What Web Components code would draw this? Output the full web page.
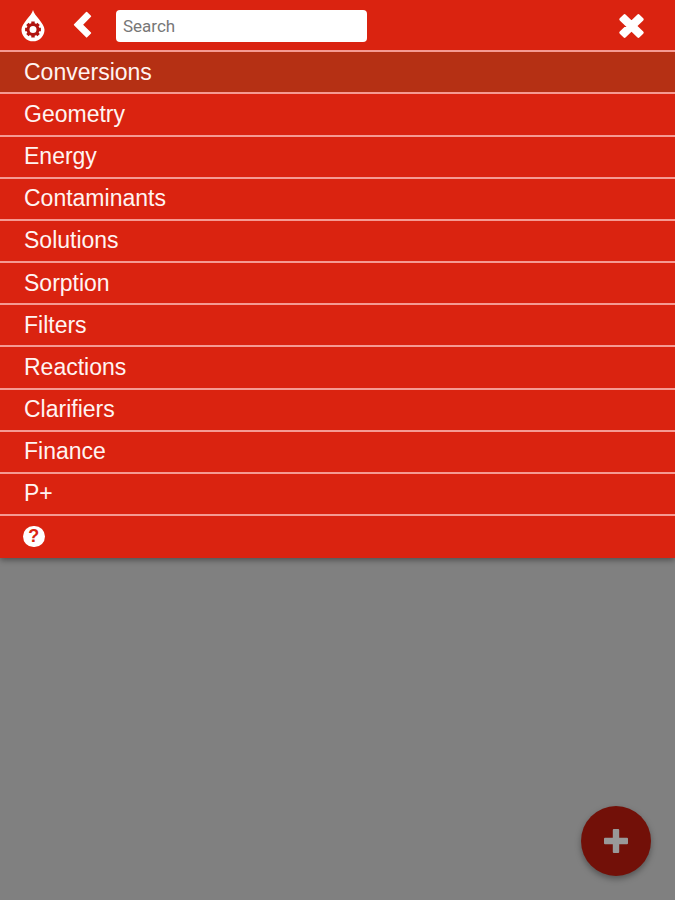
<!DOCTYPE html>
<html lang="en">
<head>
  <meta charset="UTF-8">
  <meta name="viewport" content="width=device-width, initial-scale=1">
  <title>Menu</title>
  <style>
    html,
    body {
      height: 100%;
      margin: 0;
      background: #808080;
      font-family: "Liberation Sans", Arial, sans-serif;
      overflow: hidden;
    }
  </style>
</head>
<body>
  <nav-menu>
    <menu-bar slot="bar"></menu-bar>
    <menu-item active>Conversions</menu-item>
    <menu-item>Geometry</menu-item>
    <menu-item>Energy</menu-item>
    <menu-item>Contaminants</menu-item>
    <menu-item>Solutions</menu-item>
    <menu-item>Sorption</menu-item>
    <menu-item>Filters</menu-item>
    <menu-item>Reactions</menu-item>
    <menu-item>Clarifiers</menu-item>
    <menu-item>Finance</menu-item>
    <menu-item>P+</menu-item>
    <menu-item><help-icon></help-icon></menu-item>
  </nav-menu>
  <add-button></add-button>

  <script>
    class NavMenu extends HTMLElement {
      constructor() {
        super();
        this.attachShadow({ mode: "open" });
      }

      connectedCallback() {
        this.shadowRoot.innerHTML = `
          <style>
            :host {
              display: block;
              height: 558px;
              background: #da2310;
              color: #fff4f2;
              box-shadow: 0 2px 6px rgba(0, 0, 0, 0.4);
            }
            nav {
              display: flex;
              flex-direction: column;
            }
          </style>
          <slot name="bar"></slot>
          <nav><slot></slot></nav>
        `;
      }
    }

    class MenuBar extends HTMLElement {
      constructor() {
        super();
        this.attachShadow({ mode: "open" });
      }

      connectedCallback() {
        this.shadowRoot.innerHTML = `
          <style>
            :host {
              display: flex;
              align-items: center;
              box-sizing: border-box;
              height: 50.2px;
              padding: 2px 30px 0 21px;
            }
            svg {
              display: block;
              flex: none;
            }
            .back {
              margin: 0 24px 3px 28px;
            }
            .close {
              margin-left: auto;
            }
            input {
              box-sizing: border-box;
              width: 251px;
              height: 32px;
              padding: 0 7px;
              border: 0;
              border-radius: 4px;
              background: #fff;
              font: 17px Roboto, sans-serif;
            }
            input::placeholder {
              color: #777;
            }
          </style>
          <svg width="24" height="34" viewBox="0 0 24 34">
            <path fill="#fff" d="M12 1C10.7 7 .5 14 .5 20.8a11.5 11.5 0 0 0 23 0C23.5 14 13.3 7 12 1z"/>
            <g fill="none" stroke="#b01410">
              <circle cx="12" cy="20.5" r="5" stroke-width="3"/>
              <path stroke-width="3.4" d="M12 12.6v3M12 25.4v3M4.1 20.5h3M16.9 20.5h3M6.4 14.9l2.1 2.1M15.5 24l2.1 2.1M6.4 26.1L8.5 24M15.5 17l2.1-2.1"/>
            </g>
          </svg>
          <svg class="back" width="19" height="28" viewBox="0 0 19 28">
            <path fill="#fff" stroke="#fff" stroke-width="1.6" stroke-linejoin="round" d="M13.6 1.6l3.8 3.7-8.3 8.4 8.3 8.3-3.8 3.8L1.6 13.7z"/>
          </svg>
          <input type="text" placeholder="Search">
          <svg class="close" width="27" height="26" viewBox="0 0 27 26">
            <path fill="#fff" stroke="#fff" stroke-width="3" stroke-linejoin="round" d="M6.5 2.7l7 6.6 7-6.6 3.7 3.7-6.8 6.6 6.8 6.6-3.7 3.7-7-6.6-7 6.6-3.7-3.7L9.6 13 2.8 6.4z"/>
          </svg>
        `;
      }
    }

    class MenuItem extends HTMLElement {
      constructor() {
        super();
        this.attachShadow({ mode: "open" });
      }

      connectedCallback() {
        this.shadowRoot.innerHTML = `
          <style>
            :host {
              display: flex;
              align-items: center;
              box-sizing: border-box;
              height: 42.18px;
              padding: 0 24px 1px;
              border-top: 2px solid #f59a92;
              font-size: 23px;
              line-height: 26px;
            }
            :host([active]) {
              background: #b53014;
            }
          </style>
          <slot></slot>
        `;
      }
    }

    class HelpIcon extends HTMLElement {
      constructor() {
        super();
        this.attachShadow({ mode: "open" });
      }

      connectedCallback() {
        this.shadowRoot.innerHTML = `
          <style>
            :host {
              display: flex;
              align-items: center;
              justify-content: center;
              width: 21.5px;
              height: 21.5px;
              margin: 2px 0 0 -1px;
              border-radius: 50%;
              background: #fff;
              color: #da2310;
              font-size: 18px;
              font-weight: bold;
              line-height: 21px;
            }
          </style>
          <span>?</span>
        `;
      }
    }

    class AddButton extends HTMLElement {
      constructor() {
        super();
        this.attachShadow({ mode: "open" });
      }

      connectedCallback() {
        this.shadowRoot.innerHTML = `
          <style>
            :host {
              position: fixed;
              right: 24.5px;
              bottom: 24.5px;
              display: flex;
              align-items: center;
              justify-content: center;
              width: 70px;
              height: 70px;
              border-radius: 50%;
              background: #721008;
              box-shadow: 0 3px 6px rgba(0, 0, 0, 0.35);
            }
          </style>
          <svg width="26" height="26" viewBox="0 0 26 26">
            <path fill="#999" d="M10.8 1h4.4q1 0 1 1v7.8H24q1 0 1 1v4.4q0 1-1 1h-7.8V24q0 1-1 1h-4.4q-1 0-1-1v-7.8H2q-1 0-1-1v-4.4q0-1 1-1h7.8V2q0-1 1-1z"/>
          </svg>
        `;
      }
    }

    customElements.define("nav-menu", NavMenu);
    customElements.define("menu-bar", MenuBar);
    customElements.define("menu-item", MenuItem);
    customElements.define("help-icon", HelpIcon);
    customElements.define("add-button", AddButton);
  </script>
</body>
</html>
